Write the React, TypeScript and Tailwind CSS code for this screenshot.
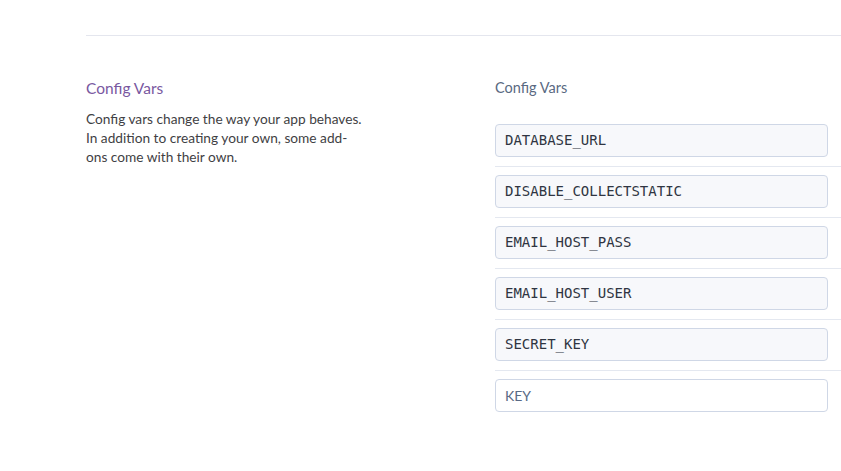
const vars = [
  "DATABASE_URL",
  "DISABLE_COLLECTSTATIC",
  "EMAIL_HOST_PASS",
  "EMAIL_HOST_USER",
  "SECRET_KEY",
];

export default function App() {
  return (
    <div className="min-h-screen w-[841px] h-[471px] bg-white font-['Lato','Open_Sans',sans-serif] overflow-hidden">
      <div className="ml-[86px] mt-[35px] border-t border-[#e4e6ee] flex">
        {/* Left — description */}
        <div className="w-[409px] pt-[42px]">
          <h2 className="text-[15.5px] leading-5 text-[#79589f]">Config Vars</h2>
          <p className="mt-[11px] text-[13.7px] leading-[19px] text-[#3f3f44]">
            Config vars change the way your app behaves.
            <br />
            In addition to creating your own, some add-
            <br />
            ons come with their own.
          </p>
        </div>

        {/* Right — inputs */}
        <div className="flex-1 pt-[42px]">
          <div className="text-[14.5px] leading-5 text-[#596981]">Config Vars</div>
          <div className="mt-[26px] flex flex-col">
            {vars.map((v) => (
              <div key={v} className="pb-[9px] mb-2 border-b border-[#e4e8f0]">
                <div className="w-[333px] h-[33px] rounded-[4px] border border-[#cfd7e6] bg-[#f7f8fb] px-[9px] flex items-center font-['DejaVu_Sans_Mono',monospace] text-[14px] text-[#2f3542]">
                  {v}
                </div>
              </div>
            ))}
            <div className="w-[333px] h-[33px] rounded-[4px] border border-[#cfd7e6] bg-white px-[9px] flex items-center text-[14px] text-[#596a85]">
              KEY
            </div>
          </div>
        </div>
      </div>
    </div>
  );
}
